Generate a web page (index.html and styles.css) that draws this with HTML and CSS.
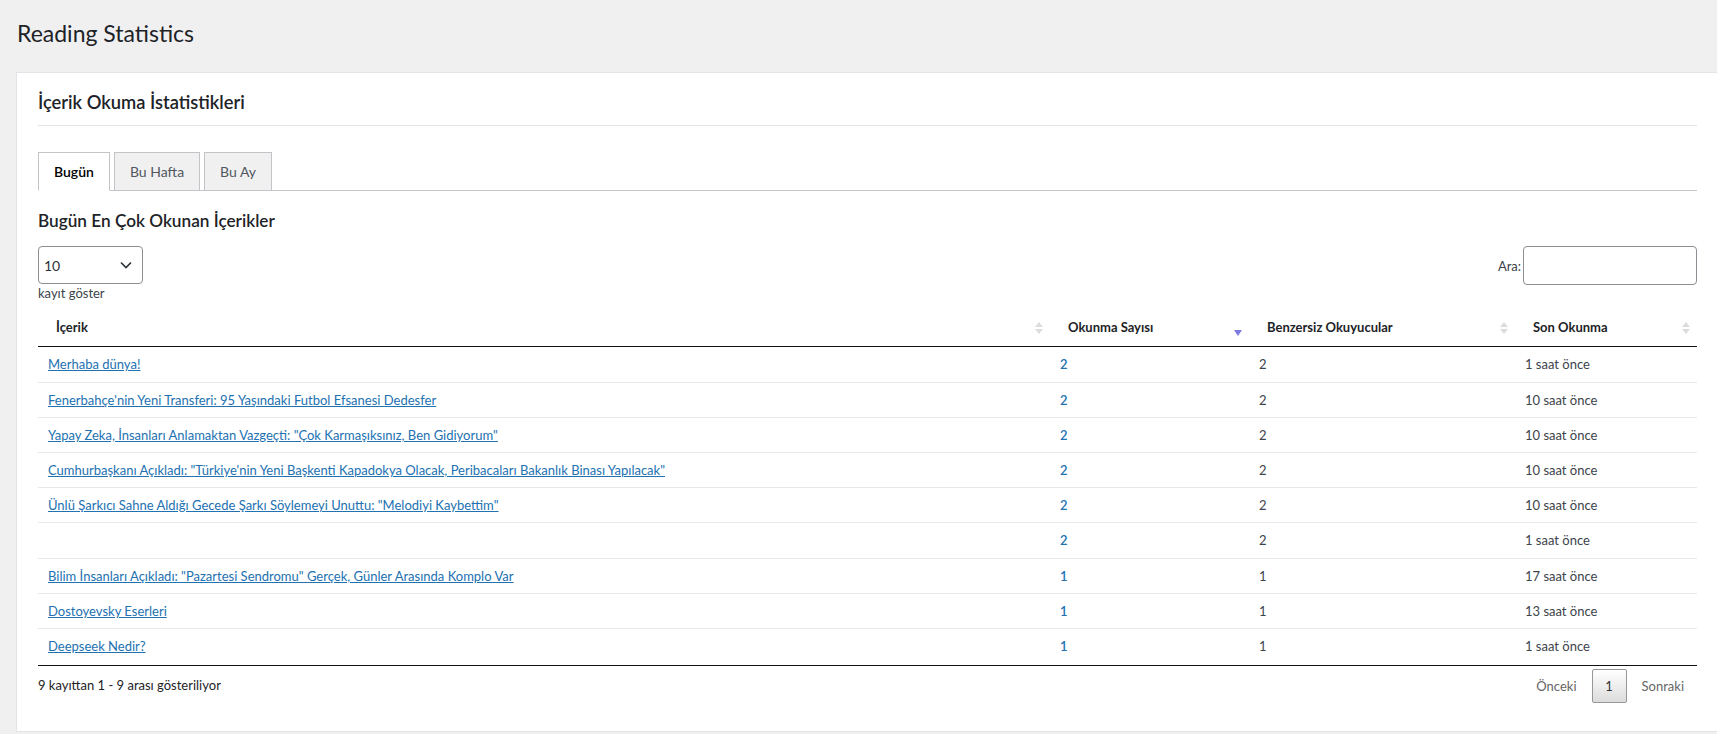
FILE: index.html
```html
<!DOCTYPE html>
<html lang="tr">
<head>
<meta charset="utf-8">
<title>Reading Statistics</title>
<link rel="stylesheet" href="styles.css">
</head>
<body>
<div class="wrap">
  <h1 class="page-title">Reading Statistics</h1>
  <div class="card">
    <h2 class="card-title">İçerik Okuma İstatistikleri</h2>
    <nav class="tabs">
      <a class="tab tab-active" href="#">Bugün</a>
      <a class="tab" href="#">Bu Hafta</a>
      <a class="tab" href="#">Bu Ay</a>
    </nav>
    <h3 class="section-title">Bugün En Çok Okunan İçerikler</h3>
    <div class="dt-top">
      <div class="dt-length">
        <div class="select-wrap">
          <select class="length-select"><option>10</option><option>25</option><option>50</option></select>
          <svg class="select-chevron" width="12" height="8" viewBox="0 0 12 8"><path d="M1 1.5 L6 6.5 L11 1.5" fill="none" stroke="#2c3338" stroke-width="1.6"/></svg>
        </div>
        <div class="length-label">kayıt göster</div>
      </div>
      <div class="dt-filter">
        <label class="filter-label">Ara:</label>
        <input class="filter-input" type="search">
      </div>
    </div>
    <table class="dt">
      <colgroup>
        <col class="col-content">
        <col class="col-count">
        <col class="col-unique">
        <col class="col-last">
      </colgroup>
      <thead>
        <tr>
          <th class="sortable">İçerik</th>
          <th class="sortable sort-desc">Okunma Sayısı</th>
          <th class="sortable">Benzersiz Okuyucular</th>
          <th class="sortable">Son Okunma</th>
        </tr>
      </thead>
      <tbody>
        <tr><td><a href="#">Merhaba dünya!</a></td><td class="num">2</td><td>2</td><td>1 saat önce</td></tr>
        <tr><td><a href="#">Fenerbahçe'nin Yeni Transferi: 95 Yaşındaki Futbol Efsanesi Dedesfer</a></td><td class="num">2</td><td>2</td><td>10 saat önce</td></tr>
        <tr><td><a href="#">Yapay Zeka, İnsanları Anlamaktan Vazgeçti: "Çok Karmaşıksınız, Ben Gidiyorum"</a></td><td class="num">2</td><td>2</td><td>10 saat önce</td></tr>
        <tr><td><a href="#">Cumhurbaşkanı Açıkladı: "Türkiye'nin Yeni Başkenti Kapadokya Olacak, Peribacaları Bakanlık Binası Yapılacak"</a></td><td class="num">2</td><td>2</td><td>10 saat önce</td></tr>
        <tr><td><a href="#">Ünlü Şarkıcı Sahne Aldığı Gecede Şarkı Söylemeyi Unuttu: "Melodiyi Kaybettim"</a></td><td class="num">2</td><td>2</td><td>10 saat önce</td></tr>
        <tr><td></td><td class="num">2</td><td>2</td><td>1 saat önce</td></tr>
        <tr><td><a href="#">Bilim İnsanları Açıkladı: "Pazartesi Sendromu" Gerçek, Günler Arasında Komplo Var</a></td><td class="num">1</td><td>1</td><td>17 saat önce</td></tr>
        <tr><td><a href="#">Dostoyevsky Eserleri</a></td><td class="num">1</td><td>1</td><td>13 saat önce</td></tr>
        <tr><td><a href="#">Deepseek Nedir?</a></td><td class="num">1</td><td>1</td><td>1 saat önce</td></tr>
      </tbody>
    </table>
    <div class="dt-bottom">
      <div class="dt-info">9 kayıttan 1 - 9 arası gösteriliyor</div>
      <div class="dt-paginate">
        <span class="page-link page-disabled">Önceki</span>
        <span class="page-btn">1</span>
        <span class="page-link page-disabled">Sonraki</span>
      </div>
    </div>
  </div>
</div>
</body>
</html>
```
FILE: styles.css
```css
* { box-sizing: border-box; }

html, body {
  margin: 0;
  padding: 0;
  background: #f0f0f1;
  font-family: Lato, "Noto Sans", "Liberation Sans", sans-serif;
  color: #3c434a;
  font-size: 13px;
}

.wrap {
  padding: 0 0 0 16px;
  overflow: hidden;
}

.page-title {
  margin: 0;
  padding: 18px 0 0 1px;
  font-size: 23px;
  font-weight: 400;
  line-height: 30px;
  color: #1d2327;
}

.card {
  margin-top: 24px;
  background: #fff;
  border: 1px solid #e2e4e7;
  border-right: none;
  box-shadow: 0 1px 1px rgba(0,0,0,.04);
  padding: 0 20px 28px 21px;
}

.card-title {
  margin: 0;
  padding: 17px 0 11px;
  font-size: 18.3px;
  font-weight: 600;
  line-height: 24px;
  color: #1d2327;
  border-bottom: 1px solid #e5e5e5;
}

.tabs {
  display: flex;
  gap: 4px;
  margin-top: 26px;
  border-bottom: 1px solid #c3c4c7;
}

.tab {
  display: block;
  margin-bottom: -1px;
  padding: 6px 15px;
  height: 39px;
  font-size: 14px;
  line-height: 25px;
  color: #50575e;
  text-decoration: none;
  background: #f0f0f1;
  border: 1px solid #c3c4c7;
}

.tab-active {
  background: #fff;
  border-bottom-color: #fff;
  color: #000;
  font-weight: 600;
}

.section-title {
  margin: 18px 0 0;
  font-size: 17.2px;
  font-weight: 600;
  line-height: 24px;
  color: #1d2327;
}

.dt-top {
  display: flex;
  justify-content: space-between;
  align-items: flex-start;
  margin-top: 13px;
}

.select-wrap {
  position: relative;
  width: 105px;
}

.length-select {
  display: block;
  width: 105px;
  height: 38px;
  margin: 0;
  padding: 0 24px 0 5px;
  font-family: inherit;
  font-size: 14px;
  color: #2c3338;
  background: #fff;
  border: 1px solid #8c8f94;
  border-radius: 4px;
  -webkit-appearance: none;
  appearance: none;
}

.select-chevron {
  position: absolute;
  right: 11px;
  top: 15px;
  pointer-events: none;
}

.length-label {
  line-height: 18px;
  color: #3c434a;
}

.dt-filter {
  display: flex;
  align-items: center;
  gap: 2px;
}

.filter-label {
  color: #3c434a;
}

.filter-input {
  width: 174px;
  height: 39px;
  margin: 0;
  border: 1px solid #8c8f94;
  border-radius: 4px;
  background: #fff;
}

.dt {
  width: 100%;
  margin-top: 6px;
  border-collapse: separate;
  border-spacing: 0;
  table-layout: fixed;
}

.col-content { width: 1012px; }
.col-count { width: 199px; }
.col-unique { width: 266px; }

.dt th {
  position: relative;
  padding: 10px 18px;
  line-height: 18px;
  text-align: left;
  font-weight: 700;
  color: #1d2327;
  border-bottom: 1px solid #111;
}

.sortable::before,
.sortable::after {
  content: "";
  position: absolute;
  right: 7px;
  width: 0;
  height: 0;
  border-left: 4px solid transparent;
  border-right: 4px solid transparent;
}

.sortable::before {
  top: 14px;
  border-bottom: 5px solid #dcdcdc;
}

.sortable::after {
  top: 21px;
  border-top: 5px solid #dcdcdc;
}

.sort-desc::before {
  display: none;
}

.sort-desc::after {
  top: 22px;
  right: 7px;
  border-left-width: 4.5px;
  border-right-width: 4.5px;
  border-top: 6px solid #7c7ce0;
}

.dt td {
  padding: 8px 10px;
  line-height: 18px;
  height: 35.2px;
  border-top: 1px solid #e8e8e8;
  color: #3c434a;
  white-space: nowrap;
}

.dt tbody tr:first-child td {
  border-top: none;
  height: 34.6px;
}

.dt tbody tr:last-child td {
  border-bottom: 1px solid #111;
  height: 38px;
  padding-bottom: 10px;
}

.dt td a {
  color: #2271b1;
  text-decoration: underline;
}

.dt td.num {
  color: #2271b1;
  font-weight: 600;
}

.dt-bottom {
  display: flex;
  justify-content: space-between;
  align-items: flex-start;
}

.dt-info {
  padding-top: 10px;
  line-height: 18px;
  color: #1d2327;
}

.dt-paginate {
  display: flex;
  align-items: center;
  gap: 2px;
  padding-top: 3px;
}

.page-link {
  padding: 0 13px;
  line-height: 34px;
  color: #666;
}

.page-btn {
  display: block;
  width: 35px;
  height: 34px;
  line-height: 32px;
  text-align: center;
  color: #333;
  border: 1px solid #979797;
  border-radius: 2px;
  background: linear-gradient(to bottom, #fff 0%, #dcdcdc 100%);
}
```
